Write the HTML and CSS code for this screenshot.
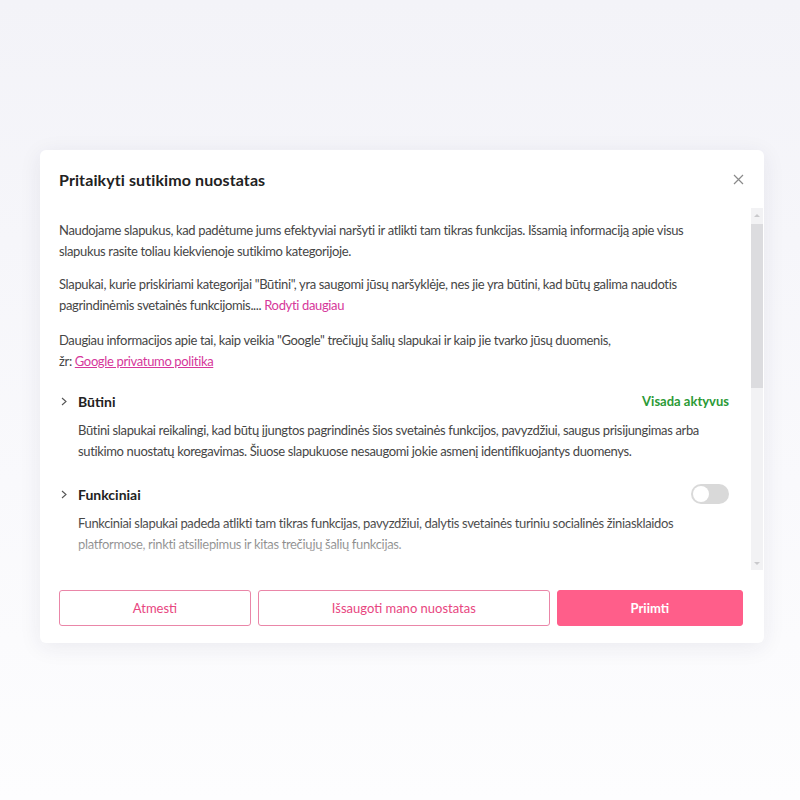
FILE: index.html
```html
<!DOCTYPE html>
<html lang="lt">
<head>
    <meta charset="UTF-8">
    <meta name="viewport" content="width=device-width, initial-scale=1.0">
    <title>Pritaikyti sutikimo nuostatas</title>
    <link rel="stylesheet" href="styles.css">
</head>
<body>
    <div class="modal">
        <div class="modal-header">
            <h2>Pritaikyti sutikimo nuostatas</h2>
            <button type="button" class="close" aria-label="Uždaryti">
                <svg width="11" height="11" viewBox="0 0 11 11"><path d="M1 1L10 10M10 1L1 10" stroke="#8a8a8a" stroke-width="1.2" fill="none"/></svg>
            </button>
        </div>

        <div class="scroll-wrap">
            <div class="scroll">
                <p>Naudojame slapukus, kad padėtume jums efektyviai naršyti ir atlikti tam tikras funkcijas. Išsamią informaciją apie visus slapukus rasite toliau kiekvienoje sutikimo kategorijoje.</p>
                <p>Slapukai, kurie priskiriami kategorijai "Būtini", yra saugomi jūsų naršyklėje, nes jie yra būtini, kad būtų galima naudotis pagrindinėmis svetainės funkcijomis.... <a href="#" class="more">Rodyti daugiau</a></p>
                <p class="google">Daugiau informacijos apie tai, kaip veikia "Google" trečiųjų šalių slapukai ir kaip jie tvarko jūsų duomenis,<br>žr: <a href="#" class="policy">Google privatumo politika</a></p>

                <div class="category">
                    <div class="cat-head">
                        <span class="chevron"><svg width="6" height="9" viewBox="0 0 6 9"><path d="M1 1L5 4.5L1 8" stroke="#555" stroke-width="1.1" fill="none"/></svg></span>
                        <span class="cat-title">Būtini</span>
                        <span class="always">Visada aktyvus</span>
                    </div>
                    <p class="cat-desc">Būtini slapukai reikalingi, kad būtų įjungtos pagrindinės šios svetainės funkcijos, pavyzdžiui, saugus prisijungimas arba sutikimo nuostatų koregavimas. Šiuose slapukuose nesaugomi jokie asmenį identifikuojantys duomenys.</p>
                </div>

                <div class="category">
                    <div class="cat-head">
                        <span class="chevron"><svg width="6" height="9" viewBox="0 0 6 9"><path d="M1 1L5 4.5L1 8" stroke="#555" stroke-width="1.1" fill="none"/></svg></span>
                        <span class="cat-title">Funkciniai</span>
                        <span class="toggle"><span class="knob"></span></span>
                    </div>
                    <p class="cat-desc">Funkciniai slapukai padeda atlikti tam tikras funkcijas, pavyzdžiui, dalytis svetainės turiniu socialinės žiniasklaidos platformose, rinkti atsiliepimus ir kitas trečiųjų šalių funkcijas.</p>
                </div>
            </div>
            <div class="scrollbar">
                <span class="arrow arrow-up"></span>
                <span class="track"><span class="thumb"></span></span>
                <span class="arrow arrow-down"></span>
            </div>
        </div>

        <div class="modal-footer">
            <button type="button" class="btn btn-outline">Atmesti</button>
            <button type="button" class="btn btn-outline">Išsaugoti mano nuostatas</button>
            <button type="button" class="btn btn-accept">Priimti</button>
        </div>
    </div>
</body>
</html>
```

FILE: styles.css
```css
html, body {
    height: 100%;
}
body {
    margin: 0;
    font-family: Lato, "Noto Sans", Arial, sans-serif;
    background: linear-gradient(180deg, #f3f3f8 0%, #f9f9fc 60%, #fdfdfe 100%);
    color: #464646;
}
.modal {
    width: 724px;
    margin: 150px 0 0 40px;
    background: #fff;
    border-radius: 6px;
    box-shadow: 0 4px 22px rgba(40, 40, 80, 0.08);
    display: flex;
    flex-direction: column;
}
.modal-header {
    height: 58px;
    display: flex;
    align-items: center;
    justify-content: space-between;
    padding: 0 19px;
}
.modal-header h2 {
    margin: 0;
    font-size: 16px;
    font-weight: 700;
    letter-spacing: 0.1px;
    color: #222;
}
.close {
    background: none;
    border: none;
    padding: 0;
    margin-right: 1px;
    width: 12px;
    height: 12px;
    display: flex;
    align-items: center;
    justify-content: center;
    cursor: pointer;
}
.scroll-wrap {
    position: relative;
    display: flex;
    height: 362px;
}
.scroll-wrap::after {
    content: "";
    position: absolute;
    left: 0;
    right: 13px;
    bottom: 0;
    height: 48px;
    background: linear-gradient(180deg, rgba(255, 255, 255, 0) 0%, rgba(255, 255, 255, 0.45) 50%, rgba(255, 255, 255, 0.8) 100%);
    pointer-events: none;
}
.scroll {
    flex: 1;
    overflow: hidden;
    padding: 12px 22px 0 19px;
    font-size: 13px;
    line-height: 21px;
    letter-spacing: -0.35px;
}
.scrollbar {
    width: 12px;
    margin-right: 1px;
    background: #f2f2f4;
    display: flex;
    flex-direction: column;
    align-items: center;
}
.arrow {
    height: 14px;
    width: 12px;
    display: flex;
    align-items: center;
    justify-content: center;
}
.arrow::before {
    content: "";
    border-left: 3px solid transparent;
    border-right: 3px solid transparent;
}
.arrow-up::before {
    border-bottom: 3px solid #c9c9cc;
}
.arrow-down::before {
    border-top: 3px solid #c9c9cc;
}
.track {
    flex: 1;
    width: 12px;
    padding-top: 2px;
}
.thumb {
    display: block;
    height: 164px;
    background: #dcdcdf;
}
.scroll p {
    margin: 0 0 12px;
}
.scroll p.google {
    margin-top: 14px;
}
.more, .policy {
    color: #d6379b;
    text-decoration: none;
}
.policy {
    text-decoration: underline;
}
.category {
    padding-top: 6px;
    margin-bottom: 8px;
}
.category + .category {
    padding-top: 13px;
}
.cat-head {
    display: flex;
    align-items: center;
    height: 22px;
    letter-spacing: 0;
}
.chevron {
    width: 19px;
    display: flex;
    align-items: center;
    padding-left: 2px;
    box-sizing: border-box;
}
.cat-title {
    flex: 1;
    font-weight: 700;
    font-size: 14px;
    color: #222;
}
.always {
    color: #2b9a36;
    font-weight: 700;
    font-size: 13px;
}
.toggle {
    width: 38px;
    height: 20px;
    border-radius: 10px;
    background: #d9d9d9;
    display: flex;
    align-items: center;
    padding: 2px;
    box-sizing: border-box;
}
.knob {
    width: 16px;
    height: 16px;
    border-radius: 50%;
    background: #fff;
}
.scroll p.cat-desc {
    margin: 8px 0 0 19px;
}
.modal-footer {
    display: flex;
    gap: 7px;
    padding: 20px 21px 17px 19px;
}
.btn {
    flex: 1 1 auto;
    height: 36px;
    border-radius: 3px;
    font-family: Lato, "Noto Sans", Arial, sans-serif;
    font-size: 13px;
    font-weight: 400;
    cursor: pointer;
    padding: 0 10px;
}
.btn-outline {
    background: #fff;
    color: #e8467f;
    border: 1.5px solid #ea86a8;
}
.btn-accept {
    background: #ff5e8a;
    color: #fff;
    border: 1.5px solid #ff5e8a;
    font-weight: 700;
}
```
